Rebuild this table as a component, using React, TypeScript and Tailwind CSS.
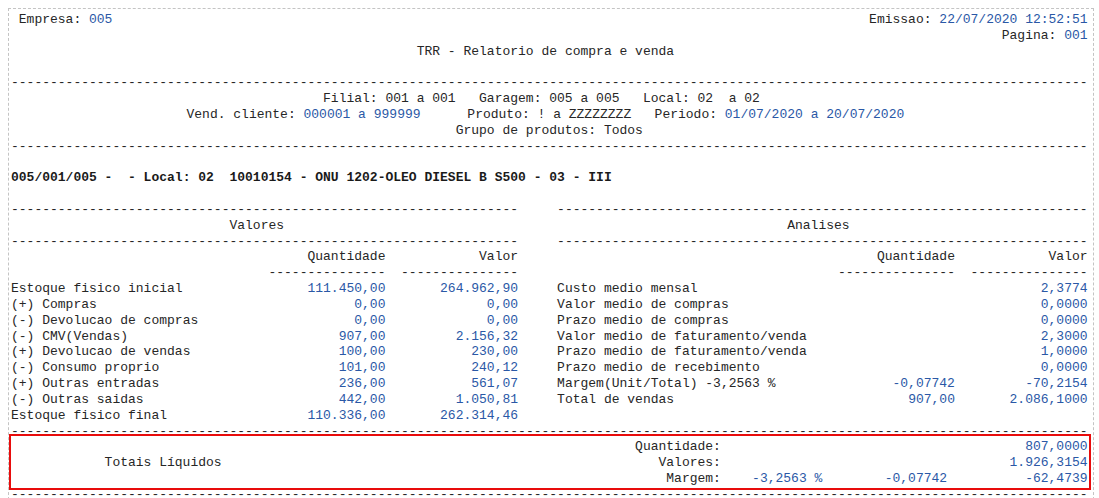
import type { ReactNode } from 'react';

const dash = (n: number) => '-'.repeat(n);

const valores = [
  ['Estoque fisico inicial', '111.450,00', '264.962,90'],
  ['(+) Compras', '0,00', '0,00'],
  ['(-) Devolucao de compras', '0,00', '0,00'],
  ['(-) CMV(Vendas)', '907,00', '2.156,32'],
  ['(+) Devolucao de vendas', '100,00', '230,00'],
  ['(-) Consumo proprio', '101,00', '240,12'],
  ['(+) Outras entradas', '236,00', '561,07'],
  ['(-) Outras saidas', '442,00', '1.050,81'],
  ['Estoque fisico final', '110.336,00', '262.314,46'],
];

const analises = [
  ['Custo medio mensal', '', '2,3774'],
  ['Valor medio de compras', '', '0,0000'],
  ['Prazo medio de compras', '', '0,0000'],
  ['Valor medio de faturamento/venda', '', '2,3000'],
  ['Prazo medio de faturamento/venda', '', '1,0000'],
  ['Prazo medio de recebimento', '', '0,0000'],
  ['Margem(Unit/Total) -3,2563 %', '-0,07742', '-70,2154'],
  ['Total de vendas', '907,00', '2.086,1000'],
];

function Line({ children, className = '' }: { children?: ReactNode; className?: string }) {
  return <div className={`h-[15.84px] whitespace-pre ${className}`}>{children}</div>;
}

function V({ children }: { children: ReactNode }) {
  return <span className="text-[#2a58a6]">{children}</span>;
}

function Panel({
  title,
  cols,
  width,
  labelWidth,
  titlePad,
  rows,
}: {
  title: string;
  cols: number;
  width: string;
  labelWidth: string;
  titlePad: string;
  rows: string[][];
}) {
  return (
    <div className={width}>
      <Line>{dash(cols)}</Line>
      <Line className={titlePad}>{title}</Line>
      <Line>{dash(cols)}</Line>
      <div className="flex">
        <div className={labelWidth} />
        <Line className="w-[15ch] text-right">Quantidade</Line>
        <Line className="ml-[2ch] w-[15ch] text-right">Valor</Line>
      </div>
      <div className="flex">
        <div className={labelWidth} />
        <Line className="w-[15ch]">{dash(15)}</Line>
        <Line className="ml-[2ch] w-[15ch]">{dash(15)}</Line>
      </div>
      {rows.map(([label, qtd, val]) => (
        <div key={label} className="flex">
          <Line className={labelWidth}>{label}</Line>
          <Line className="w-[15ch] text-right">
            <V>{qtd}</V>
          </Line>
          <Line className="ml-[2ch] w-[15ch] text-right">
            <V>{val}</V>
          </Line>
        </div>
      ))}
    </div>
  );
}

export default function App() {
  return (
    <div className="min-h-screen bg-white">
      <div className="ml-2 mt-2 w-[1086px] border border-dashed border-[#c4c4c4] pl-[2px] pt-[3px] font-['Liberation_Mono',monospace] text-[13px] leading-[15.84px] text-[#262626]">
        <div className="w-[138ch]">
          {/* Cabecalho */}
          <div className="flex justify-between">
            <Line className="pl-[1ch]">
              Empresa: <V>005</V>
            </Line>
            <Line>
              Emissao: <V>22/07/2020 12:52:51</V>
            </Line>
          </div>
          <Line className="text-right">
            Pagina: <V>001</V>
          </Line>
          <Line className="text-center">{'TRR - Relatorio de compra e venda '}</Line>
          <Line />
          <Line>{dash(138)}</Line>

          {/* Filtros */}
          <Line className="text-center">{'Filial: 001 a 001   Garagem: 005 a 005   Local: 02  a 02  '}</Line>
          <Line className="text-center">
            Vend. cliente: <V>000001 a 999999</V>      Produto: ! a ZZZZZZZZ   Periodo:{' '}
            <V>01/07/2020 a 20/07/2020</V>{' '}
          </Line>
          <Line className="text-center">Grupo de produtos: Todos</Line>
          <Line>{dash(138)}</Line>
          <Line />
          <Line className="font-bold text-[#1a1a1a]">
            005/001/005 -  - Local: 02  10010154 - ONU 1202-OLEO DIESEL B S500 - 03 - III
          </Line>
          <Line />

          {/* Valores / Analises */}
          <div className="flex">
            <Panel title="Valores" cols={65} width="w-[65ch]" labelWidth="w-[33ch]" titlePad="pl-[28ch]" rows={valores} />
            <div className="ml-[5ch]">
              <Panel title="Analises" cols={68} width="w-[68ch]" labelWidth="w-[36ch]" titlePad="pl-[29.5ch]" rows={analises} />
            </div>
          </div>
          <Line>{dash(138)}</Line>

          {/* Totais */}
          <div className="relative flex">
            <div className="flex w-[80ch] items-center pl-[12ch]">
              <span className="whitespace-pre">Totais Líquidos</span>
            </div>
            <div className="w-[58ch]">
              <div className="flex">
                <Line className="w-[11ch] text-right">Quantidade:</Line>
                <Line className="w-[13ch]" />
                <Line className="w-[16ch]" />
                <Line className="w-[18ch] text-right">
                  <V>807,0000</V>
                </Line>
              </div>
              <div className="flex">
                <Line className="w-[11ch] text-right">Valores:</Line>
                <Line className="w-[13ch]" />
                <Line className="w-[16ch]" />
                <Line className="w-[18ch] text-right">
                  <V>1.926,3154</V>
                </Line>
              </div>
              <div className="flex">
                <Line className="w-[11ch] text-right">Margem:</Line>
                <Line className="w-[13ch] text-right">
                  <V>-3,2563 %</V>
                </Line>
                <Line className="w-[16ch] text-right">
                  <V>-0,07742</V>
                </Line>
                <Line className="w-[18ch] text-right">
                  <V>-62,4739</V>
                </Line>
              </div>
            </div>
            <div className="pointer-events-none absolute -bottom-[3px] -left-[2px] -right-[3px] -top-[5px] border-2 border-[#e80c0c]" />
          </div>
          <Line>{dash(138)}</Line>
          <Line />
        </div>
      </div>
    </div>
  );
}
